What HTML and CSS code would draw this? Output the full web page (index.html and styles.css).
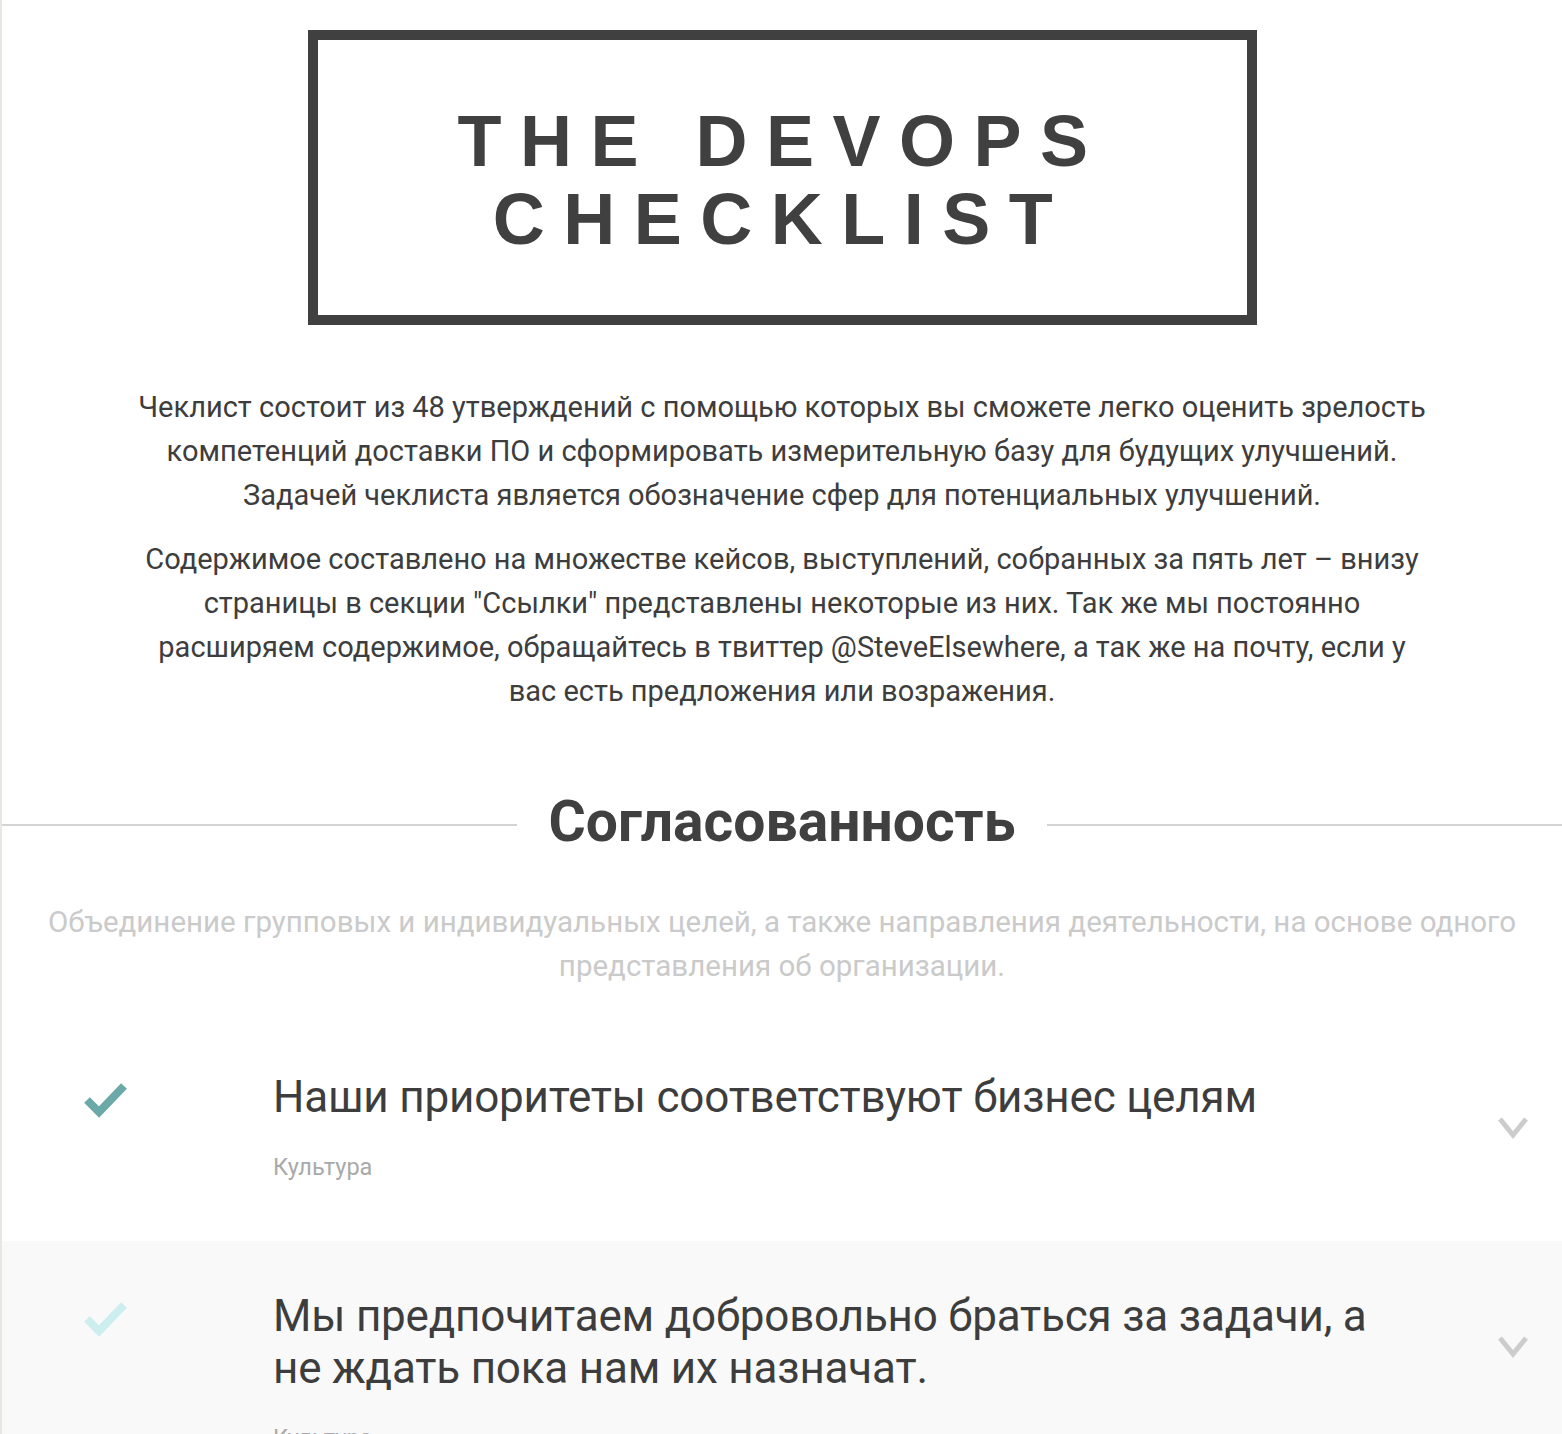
FILE: index.html
```html
<!DOCTYPE html>
<html lang="ru">
<head>
<meta charset="utf-8">
<title>The DevOps Checklist</title>
<link rel="stylesheet" href="styles.css">
</head>
<body>
<div class="page">
  <header class="hero">
    <div class="logo-box">
      <h1 class="logo">THE DEVOPS<br>CHECKLIST</h1>
    </div>
  </header>
  <section class="intro">
    <p>Чеклист состоит из 48 утверждений с помощью которых вы сможете легко оценить зрелость компетенций доставки ПО и сформировать измерительную базу для будущих улучшений. Задачей чеклиста является обозначение сфер для потенциальных улучшений.</p>
    <p>Содержимое составлено на множестве кейсов, выступлений, собранных за пять лет – внизу страницы в секции "Ссылки" представлены некоторые из них. Так же мы постоянно расширяем содержимое, обращайтесь в твиттер @SteveElsewhere, а так же на почту, если у вас есть предложения или возражения.</p>
  </section>
  <section class="section">
    <h2 class="section-title"><span>Согласованность</span></h2>
    <p class="section-desc">Объединение групповых и индивидуальных целей, а также направления деятельности, на основе одного представления об организации.</p>
    <ul class="items">
      <li class="item">
        <svg class="check" width="44" height="36" viewBox="0 0 44 36"><polyline points="3,17 15,29 40,3" fill="none" stroke="#6aa9a8" stroke-width="8"/></svg>
        <div class="item-body">
          <div class="item-title">Наши приоритеты соответствуют бизнес целям</div>
          <div class="item-tag">Культура</div>
        </div>
        <svg class="chev" width="30" height="24" viewBox="0 0 30 24"><polyline points="2,3 15,19 28,3" fill="none" stroke="#cccccc" stroke-width="5"/></svg>
      </li>
      <li class="item item-alt">
        <svg class="check" width="44" height="36" viewBox="0 0 44 36"><polyline points="3,17 15,29 40,3" fill="none" stroke="#cdeeee" stroke-width="8"/></svg>
        <div class="item-body">
          <div class="item-title">Мы предпочитаем добровольно браться за задачи, а не ждать пока нам их назначат.</div>
          <div class="item-tag">Культура</div>
        </div>
        <svg class="chev" width="30" height="24" viewBox="0 0 30 24"><polyline points="2,3 15,19 28,3" fill="none" stroke="#cccccc" stroke-width="5"/></svg>
      </li>
    </ul>
  </section>
</div>
</body>
</html>
```
FILE: styles.css
```css
* { box-sizing: border-box; }
html, body { margin: 0; padding: 0; background: #fff; }
body { font-family: Roboto, "Noto Sans", sans-serif; color: #3d3d3d; }
.page { border-left: 2px solid #e8e8e3; min-height: 1434px; overflow: hidden; }

.hero { display: flex; justify-content: center; padding-top: 30px; }
.logo-box { width: 949px; height: 295px; border: 10px solid #404040; display: flex; align-items: center; justify-content: center; padding-top: 4px; }
.logo { margin: 0; font-family: "Liberation Sans", Arial, sans-serif; font-weight: bold; font-size: 72px; line-height: 78px; letter-spacing: 18.5px; text-align: center; color: #404040; }

.intro { width: 1300px; margin: 60px auto 0; text-align: center; font-size: 29px; line-height: 44px; }
.intro p { margin: 0 0 20px; }

.section { margin-top: 69px; }
.section-title { display: flex; align-items: center; gap: 32px; margin: 0; font-size: 57px; font-weight: bold; color: #404040; line-height: 80px; }
.section-title::before, .section-title::after { content: ""; flex: 1; height: 2px; margin-top: 6px; background: #d4d4d4; }
.section-desc { width: 1490px; margin: 38px auto 0; text-align: center; font-size: 29.5px; line-height: 44px; color: #cacaca; }

.items { list-style: none; margin: 34px 0 0; padding: 0; }
.item { display: flex; align-items: flex-start; padding: 49px 34px 40px 82px; min-height: 219px; }
.item-alt { background: #f9f9f9; }
.check { flex: none; margin-top: 12px; }
.item-body { flex: 1; padding-left: 145px; }
.item-title { font-size: 44px; line-height: 52px; letter-spacing: -0.2px; color: #3d3d3d; max-width: 1120px; }
.item-tag { margin-top: 30px; font-size: 23.5px; color: #a9a9a9; }
.chev { flex: none; margin-top: 45px; }
```
